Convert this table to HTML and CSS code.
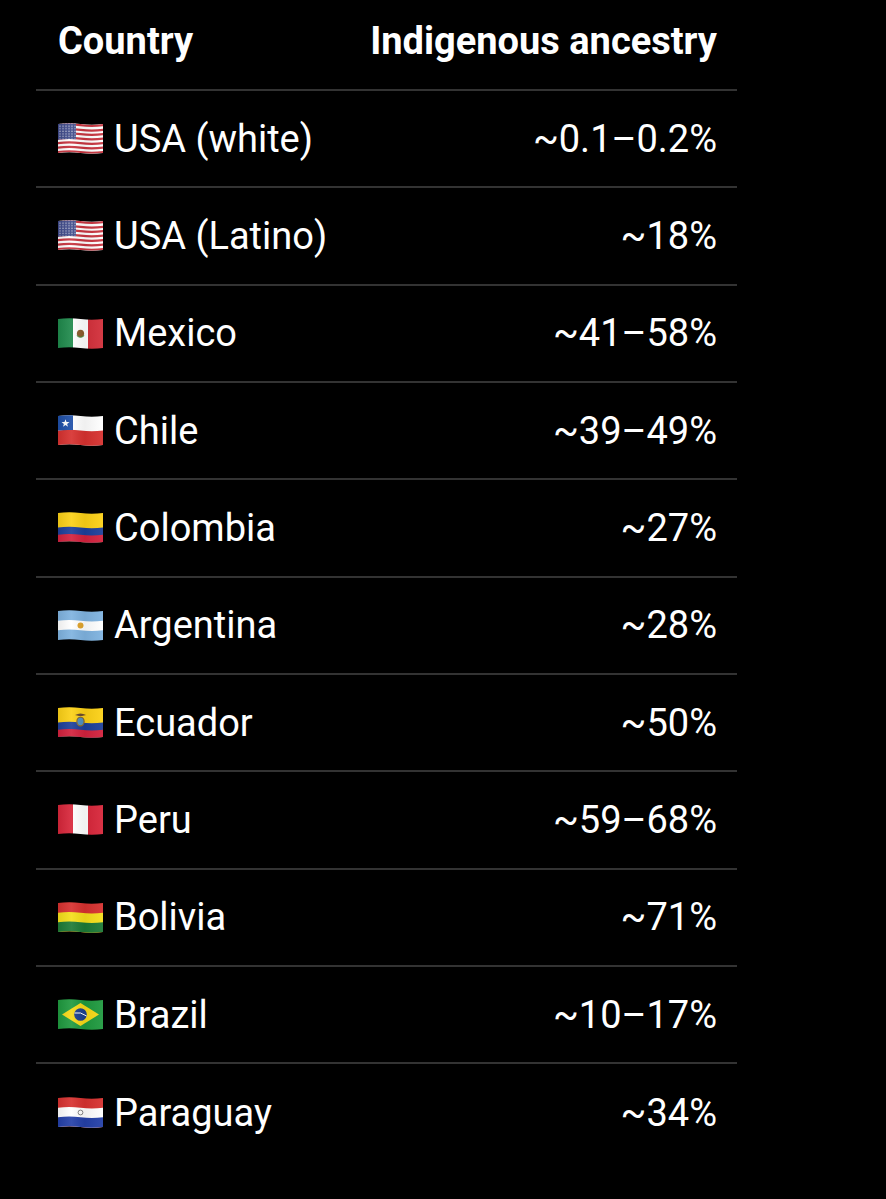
FILE: index.html
```html
<!DOCTYPE html>
<html lang="en">
<head>
<meta charset="utf-8">
<title>Indigenous ancestry by country</title>
<link rel="stylesheet" href="styles.css">
</head>
<body>
<svg class="defs" width="0" height="0" aria-hidden="true">
  <defs>
    <clipPath id="wave">
      <path d="M0,2 Q11.25,0.5 22.5,2 T45,2 L45,31 Q33.75,32.5 22.5,31 T0,31 Z"/>
    </clipPath>
    <linearGradient id="shade" x1="0" y1="0" x2="1" y2="0">
      <stop offset="0" stop-color="#000" stop-opacity="0.08"/>
      <stop offset="0.3" stop-color="#fff" stop-opacity="0.08"/>
      <stop offset="0.6" stop-color="#000" stop-opacity="0.06"/>
      <stop offset="1" stop-color="#fff" stop-opacity="0.06"/>
    </linearGradient>
    <pattern id="stars" x="1" y="3" width="3" height="2.6" patternUnits="userSpaceOnUse">
      <circle cx="1" cy="1" r="0.55" fill="#fff"/>
    </pattern>
  </defs>
</svg>

<div class="table">
  <div class="row head">
    <div class="cell">Country</div>
    <div class="cell">Indigenous ancestry</div>
  </div>

  <div class="row">
    <div class="cell country">
      <svg class="flag" viewBox="0 0 45 33"><g clip-path="url(#wave)">
        <rect width="45" height="33" fill="#fff"/>
        <path fill="#c8343f" d="M0,2 Q11.25,0.5 22.5,2 T45,2 L45,4.2 Q33.75,5.7 22.5,4.2 T0,4.2 Z M0,6.7 Q11.25,5.2 22.5,6.7 T45,6.7 L45,8.9 Q33.75,10.4 22.5,8.9 T0,8.9 Z M0,11.1 Q11.25,9.6 22.5,11.1 T45,11.1 L45,13.3 Q33.75,14.8 22.5,13.3 T0,13.3 Z M0,15.6 Q11.25,14.1 22.5,15.6 T45,15.6 L45,17.8 Q33.75,19.3 22.5,17.8 T0,17.8 Z M0,20 Q11.25,18.5 22.5,20 T45,20 L45,22.2 Q33.75,23.7 22.5,22.2 T0,22.2 Z M0,24.5 Q11.25,23 22.5,24.5 T45,24.5 L45,26.7 Q33.75,28.2 22.5,26.7 T0,26.7 Z M0,28.9 Q11.25,27.4 22.5,28.9 T45,28.9 L45,31.1 Q33.75,32.6 22.5,31.1 T0,31.1 Z"/>
        <path fill="#3f4a8a" d="M0,2 Q9,0.8 18,1.7 L18,17.3 Q9,16.3 0,17.8 Z"/>
        <rect x="0" y="1" width="18" height="16.5" fill="url(#stars)"/>
        <rect width="45" height="33" fill="url(#shade)"/>
      </g></svg>
      <span>USA (white)</span>
    </div>
    <div class="cell value">~0.1–0.2%</div>
  </div>

  <div class="row">
    <div class="cell country">
      <svg class="flag" viewBox="0 0 45 33"><g clip-path="url(#wave)">
        <rect width="45" height="33" fill="#fff"/>
        <path fill="#c8343f" d="M0,2 Q11.25,0.5 22.5,2 T45,2 L45,4.2 Q33.75,5.7 22.5,4.2 T0,4.2 Z M0,6.7 Q11.25,5.2 22.5,6.7 T45,6.7 L45,8.9 Q33.75,10.4 22.5,8.9 T0,8.9 Z M0,11.1 Q11.25,9.6 22.5,11.1 T45,11.1 L45,13.3 Q33.75,14.8 22.5,13.3 T0,13.3 Z M0,15.6 Q11.25,14.1 22.5,15.6 T45,15.6 L45,17.8 Q33.75,19.3 22.5,17.8 T0,17.8 Z M0,20 Q11.25,18.5 22.5,20 T45,20 L45,22.2 Q33.75,23.7 22.5,22.2 T0,22.2 Z M0,24.5 Q11.25,23 22.5,24.5 T45,24.5 L45,26.7 Q33.75,28.2 22.5,26.7 T0,26.7 Z M0,28.9 Q11.25,27.4 22.5,28.9 T45,28.9 L45,31.1 Q33.75,32.6 22.5,31.1 T0,31.1 Z"/>
        <path fill="#3f4a8a" d="M0,2 Q9,0.8 18,1.7 L18,17.3 Q9,16.3 0,17.8 Z"/>
        <rect x="0" y="1" width="18" height="16.5" fill="url(#stars)"/>
        <rect width="45" height="33" fill="url(#shade)"/>
      </g></svg>
      <span>USA (Latino)</span>
    </div>
    <div class="cell value">~18%</div>
  </div>

  <div class="row">
    <div class="cell country">
      <svg class="flag" viewBox="0 0 45 33"><g clip-path="url(#wave)">
        <rect width="15" height="33" fill="#1f8a4c"/>
        <rect x="15" width="15" height="33" fill="#fff"/>
        <rect x="30" width="15" height="33" fill="#d32f3a"/>
        <ellipse cx="22.5" cy="16.5" rx="3.6" ry="3.8" fill="#8a5a2b"/>
        <path d="M18.8,18.5 Q22.5,22 26.2,18.5" stroke="#3f8a3a" stroke-width="1" fill="none"/>
        <rect width="45" height="33" fill="url(#shade)"/>
      </g></svg>
      <span>Mexico</span>
    </div>
    <div class="cell value">~41–58%</div>
  </div>

  <div class="row">
    <div class="cell country">
      <svg class="flag" viewBox="0 0 45 33"><g clip-path="url(#wave)">
        <rect width="45" height="33" fill="#fff"/>
        <path fill="#d7312f" d="M0,16.5 Q11.25,15 22.5,16.5 T45,16.5 L45,33 L0,33 Z"/>
        <path fill="#1e4fa8" d="M0,0 L15,0 L15,16.1 Q7.5,15.6 0,16.5 Z"/>
        <polygon fill="#fff" points="7.5,5.2 8.5,8.1 11.5,8.1 9.1,9.9 10,12.8 7.5,11 5,12.8 5.9,9.9 3.5,8.1 6.5,8.1"/>
        <rect width="45" height="33" fill="url(#shade)"/>
      </g></svg>
      <span>Chile</span>
    </div>
    <div class="cell value">~39–49%</div>
  </div>

  <div class="row">
    <div class="cell country">
      <svg class="flag" viewBox="0 0 45 33"><g clip-path="url(#wave)">
        <rect width="45" height="33" fill="#fcd116"/>
        <path fill="#1d3f9a" d="M0,16.5 Q11.25,15 22.5,16.5 T45,16.5 L45,33 L0,33 Z"/>
        <path fill="#d4213d" d="M0,23.8 Q11.25,22.3 22.5,23.8 T45,23.8 L45,33 L0,33 Z"/>
        <rect width="45" height="33" fill="url(#shade)"/>
      </g></svg>
      <span>Colombia</span>
    </div>
    <div class="cell value">~27%</div>
  </div>

  <div class="row">
    <div class="cell country">
      <svg class="flag" viewBox="0 0 45 33"><g clip-path="url(#wave)">
        <rect width="45" height="33" fill="#7fb3e0"/>
        <path fill="#fff" d="M0,11.7 Q11.25,10.2 22.5,11.7 T45,11.7 L45,21.3 Q33.75,22.8 22.5,21.3 T0,21.3 Z"/>
        <circle cx="22.5" cy="16.5" r="3" fill="#e0a32a"/>
        <rect width="45" height="33" fill="url(#shade)"/>
      </g></svg>
      <span>Argentina</span>
    </div>
    <div class="cell value">~28%</div>
  </div>

  <div class="row">
    <div class="cell country">
      <svg class="flag" viewBox="0 0 45 33"><g clip-path="url(#wave)">
        <rect width="45" height="33" fill="#fcd116"/>
        <path fill="#1d3f9a" d="M0,16.5 Q11.25,15 22.5,16.5 T45,16.5 L45,33 L0,33 Z"/>
        <path fill="#d4213d" d="M0,23.8 Q11.25,22.3 22.5,23.8 T45,23.8 L45,33 L0,33 Z"/>
        <path d="M17,9 Q22.5,6 28,9 L24,10 L21,10 Z" fill="#6b4a2a"/>
        <ellipse cx="22.5" cy="15.5" rx="3.6" ry="4.4" fill="#4f8fc0" stroke="#8a6a2a" stroke-width="1.2"/>
        <rect width="45" height="33" fill="url(#shade)"/>
      </g></svg>
      <span>Ecuador</span>
    </div>
    <div class="cell value">~50%</div>
  </div>

  <div class="row">
    <div class="cell country">
      <svg class="flag" viewBox="0 0 45 33"><g clip-path="url(#wave)">
        <rect width="15" height="33" fill="#d8263a"/>
        <rect x="15" width="15" height="33" fill="#fff"/>
        <rect x="30" width="15" height="33" fill="#d8263a"/>
        <rect width="45" height="33" fill="url(#shade)"/>
      </g></svg>
      <span>Peru</span>
    </div>
    <div class="cell value">~59–68%</div>
  </div>

  <div class="row">
    <div class="cell country">
      <svg class="flag" viewBox="0 0 45 33"><g clip-path="url(#wave)">
        <rect width="45" height="33" fill="#d7312f"/>
        <path fill="#f5df1a" d="M0,11.7 Q11.25,10.2 22.5,11.7 T45,11.7 L45,33 L0,33 Z"/>
        <path fill="#1c7a36" d="M0,21.3 Q11.25,19.8 22.5,21.3 T45,21.3 L45,33 L0,33 Z"/>
        <rect width="45" height="33" fill="url(#shade)"/>
      </g></svg>
      <span>Bolivia</span>
    </div>
    <div class="cell value">~71%</div>
  </div>

  <div class="row">
    <div class="cell country">
      <svg class="flag" viewBox="0 0 45 33"><g clip-path="url(#wave)">
        <rect width="45" height="33" fill="#1f9a3f"/>
        <polygon fill="#f7d917" points="22.5,5 41,16.5 22.5,28 4,16.5"/>
        <circle cx="22.5" cy="16.5" r="6.3" fill="#1b3f8f"/>
        <path d="M16.6,15 Q22.5,13.5 28.6,18" stroke="#fff" stroke-width="1" fill="none"/>
        <rect width="45" height="33" fill="url(#shade)"/>
      </g></svg>
      <span>Brazil</span>
    </div>
    <div class="cell value">~10–17%</div>
  </div>

  <div class="row">
    <div class="cell country">
      <svg class="flag" viewBox="0 0 45 33"><g clip-path="url(#wave)">
        <rect width="45" height="33" fill="#d7312f"/>
        <path fill="#fff" d="M0,11.7 Q11.25,10.2 22.5,11.7 T45,11.7 L45,33 L0,33 Z"/>
        <path fill="#2440a8" d="M0,21.3 Q11.25,19.8 22.5,21.3 T45,21.3 L45,33 L0,33 Z"/>
        <circle cx="22.5" cy="16.5" r="2.4" fill="none" stroke="#777" stroke-width="0.9"/>
        <rect width="45" height="33" fill="url(#shade)"/>
      </g></svg>
      <span>Paraguay</span>
    </div>
    <div class="cell value">~34%</div>
  </div>
</div>
</body>
</html>
```

FILE: styles.css
```css
html, body {
  margin: 0;
  padding: 0;
  background: #000;
}

body {
  font-family: Roboto, "Noto Sans", "Liberation Sans", sans-serif;
  color: #fff;
  width: 886px;
  height: 1199px;
  overflow: hidden;
}

.defs {
  position: absolute;
  width: 0;
  height: 0;
}

.table {
  width: 701px;
  margin-left: 36px;
  display: flex;
  flex-direction: column;
}

.row {
  display: flex;
  justify-content: space-between;
  align-items: center;
  box-sizing: border-box;
  height: 97.33px;
  padding: 0 20px 0 22px;
  border-bottom: 2px solid #333;
  font-size: 38px;
}

.row:last-child {
  border-bottom: none;
}

.row.head {
  height: 91px;
  padding-bottom: 8px;
  font-weight: 700;
}

.country {
  display: flex;
  align-items: center;
  gap: 11px;
}

.flag {
  width: 45px;
  height: 33px;
  display: block;
  flex: none;
}

.value {
  text-align: right;
}
```
